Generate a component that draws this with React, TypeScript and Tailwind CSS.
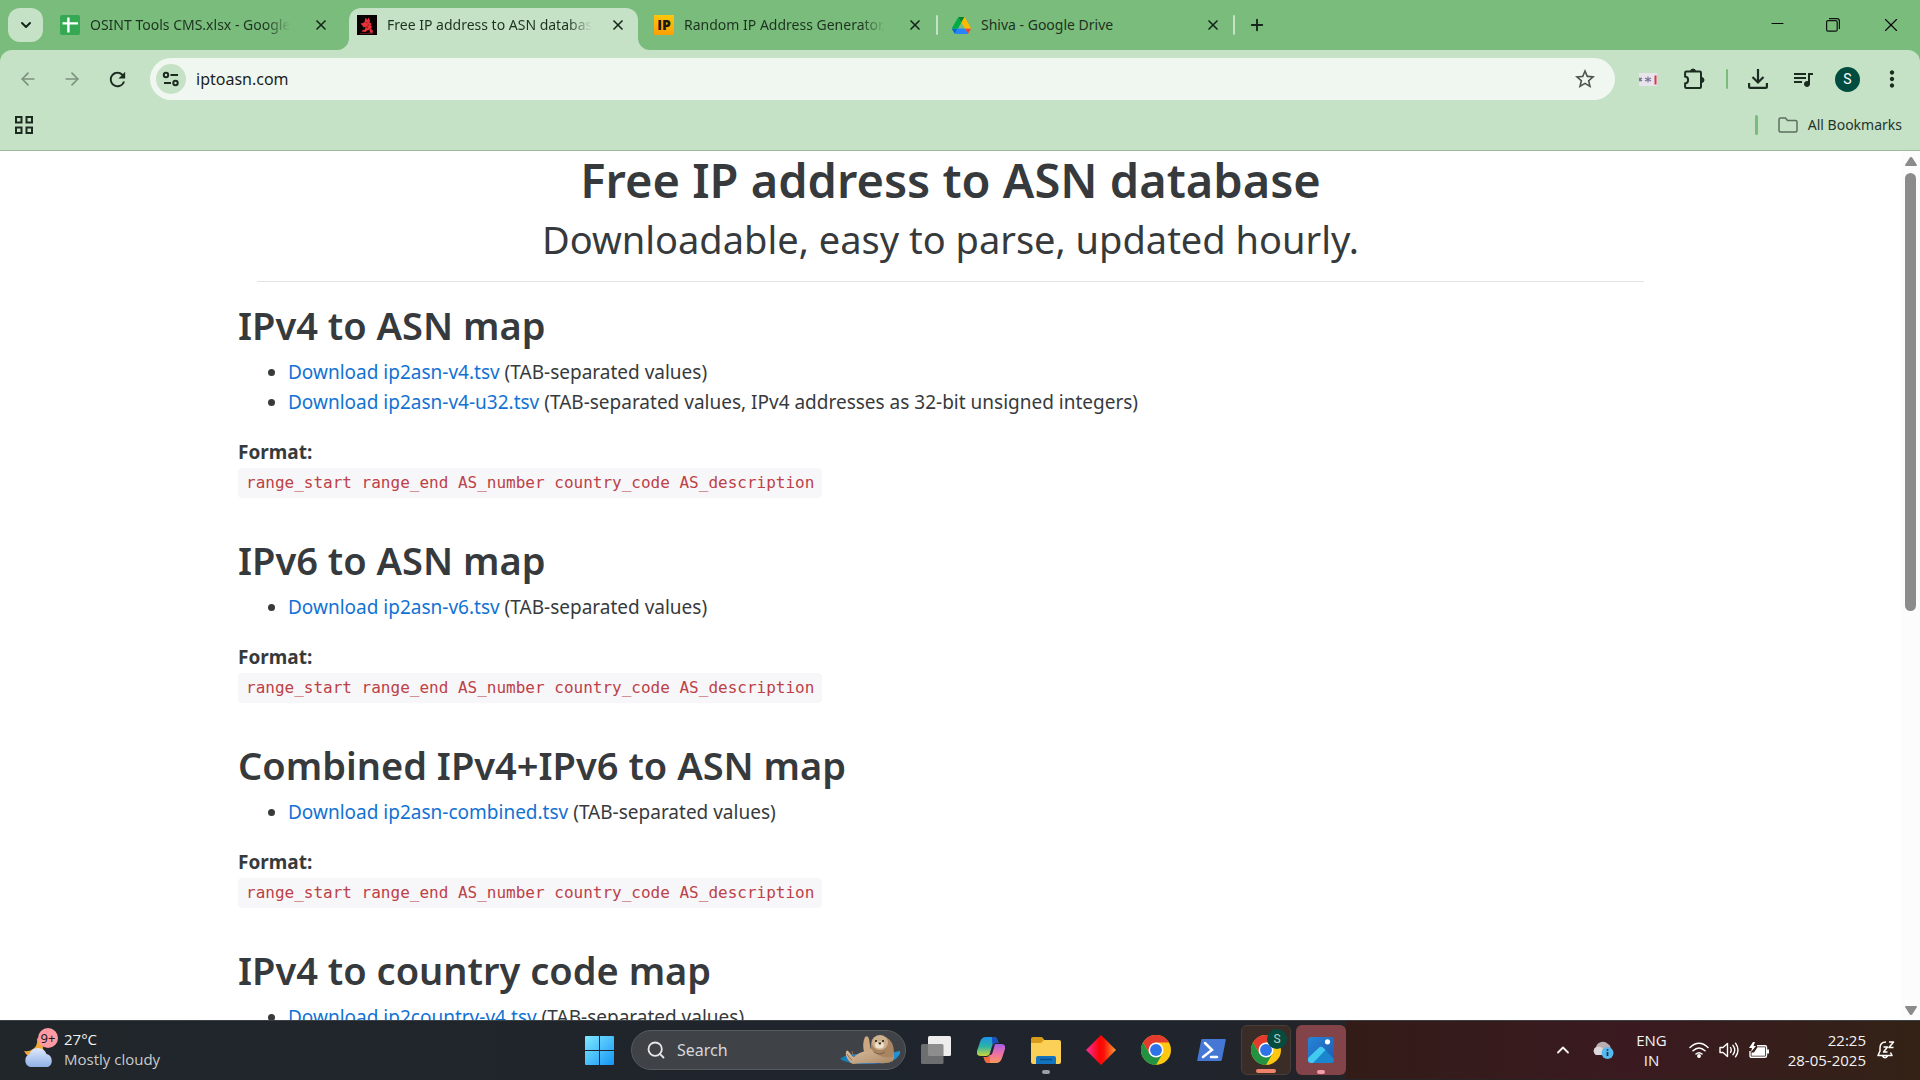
import type { ReactNode } from "react";
import { ChevronDown, ChevronUp, ArrowLeft, ArrowRight, X, Plus, Search, Minus } from "lucide-react";
import { MdRefresh, MdOutlineStarBorder, MdQueueMusic, MdMoreVert } from "react-icons/md";

const FORMAT = "range_start range_end AS_number country_code AS_description";

type Download = { name: string; note: string };

const SECTIONS: { title: string; items: Download[] }[] = [
  {
    title: "IPv4 to ASN map",
    items: [
      { name: "ip2asn-v4.tsv", note: "(TAB-separated values)" },
      { name: "ip2asn-v4-u32.tsv", note: "(TAB-separated values, IPv4 addresses as 32-bit unsigned integers)" },
    ],
  },
  { title: "IPv6 to ASN map", items: [{ name: "ip2asn-v6.tsv", note: "(TAB-separated values)" }] },
  { title: "Combined IPv4+IPv6 to ASN map", items: [{ name: "ip2asn-combined.tsv", note: "(TAB-separated values)" }] },
  { title: "IPv4 to country code map", items: [{ name: "ip2country-v4.tsv", note: "(TAB-separated values)" }] },
];

function SheetsIcon() {
  return (
    <svg viewBox="0 0 20 20" className="size-5 shrink-0">
      <rect width="20" height="20" rx="2" fill="#34a853" />
      <path d="M7.200 2.500h2.400v4.700H18v2.400H9.600v8H7.200v-8H2.500V7.200h4.700z" fill="#fff" />
    </svg>
  );
}

function RabbitIcon() {
  return (
    <svg viewBox="0 0 20 20" className="size-5 shrink-0">
      <rect width="20" height="20" fill="#0a0202" />
      <path d="M8.500 2.500l2 2.500 1-2.500 1.500 3-.5 2 2.500 1.500-1.500 1 1.500 2-1 1.500 2 2.500-.5 2-3-.5.5-2-2-.5-2.500 2-4-.5 1.500-1.500 2-.5.5-3-2 1-1.500-2.500L3.500 8.500 6 8l1.500-1z" fill="#e8323a" />
      <path d="M9 7l1.500 1M9 12l2 1M11.500 9.500l-1 2M12 15l1.500-1" stroke="#7a0c10" strokeWidth=".8" />
      <path d="M3 18.500h13" stroke="#8d1a1c" strokeWidth=".7" />
    </svg>
  );
}

function IpIcon() {
  return (
    <span className="flex size-5 shrink-0 items-center justify-center bg-linear-to-b from-[#fdc70c] to-[#fb9f06] font-['Open_Sans'] text-sm leading-5 font-extrabold text-[#1c1a10]">
      IP
    </span>
  );
}

function DriveIcon() {
  return (
    <svg viewBox="0 0 88 78" className="h-[17px] w-[19px] shrink-0">
      <path d="m6.600 66.850 3.850 6.650c.8 1.400 1.950 2.500 3.300 3.300l13.750-23.800H0c0 1.550.4 3.100 1.200 4.500z" fill="#0066da" />
      <path d="M43.650 25 29.900 1.200c-1.350.8-2.500 1.900-3.300 3.300L1.200 48.500A9 9 0 0 0 0 53h27.500z" fill="#00ac47" />
      <path d="M73.550 76.800c1.350-.8 2.500-1.900 3.300-3.300l1.600-2.750L86.100 57.500c.8-1.400 1.200-2.950 1.200-4.500H59.800l5.850 11.500z" fill="#ea4335" />
      <path d="M43.650 25 57.400 1.200C56.050.4 54.500 0 52.900 0H34.400c-1.600 0-3.150.45-4.500 1.200z" fill="#00832d" />
      <path d="M59.800 53H27.500L13.750 76.800c1.350.8 2.900 1.200 4.500 1.200h50.800c1.600 0 3.150-.45 4.500-1.200z" fill="#2684fc" />
      <path d="M73.400 26.500 60.700 4.500c-.8-1.400-1.950-2.500-3.300-3.300L43.650 25 59.800 53h27.450c0-1.550-.4-3.100-1.200-4.500z" fill="#ffba00" />
    </svg>
  );
}

function ChromeIcon({ className }: { className: string }) {
  return (
    <svg viewBox="0 0 48 48" className={className}>
      <circle cx="24" cy="24" r="24" fill="#fdc712" />
      <path d="M3.200 12A24 24 0 0 1 44.800 12H24L13.600 30z" fill="#e33b2e" />
      <path d="M3.200 12A24 24 0 0 0 24 48L34.400 30 24 34 13.600 30z" fill="#229342" />
      <circle cx="24" cy="24" r="12" fill="#fff" />
      <circle cx="24" cy="24" r="9.500" fill="#2f73e8" />
    </svg>
  );
}

function Tab({ icon, title, active = false, fade = false }: { icon: ReactNode; title: string; active?: boolean; fade?: boolean }) {
  return (
    <div className={active ? "relative flex h-[42px] w-[289px] items-center rounded-t-xl bg-[#c5e1c6] px-2" : "flex h-[42px] w-[289px] items-center px-2"}>
      {active && (
        <>
          <svg viewBox="0 0 12 12" className="absolute bottom-0 -left-3 size-3"><path d="M12 0v12H0A12 12 0 0 0 12 0z" fill="#c5e1c6" /></svg>
          <svg viewBox="0 0 12 12" className="absolute -right-3 bottom-0 size-3"><path d="M0 0v12h12A12 12 0 0 1 0 0z" fill="#c5e1c6" /></svg>
        </>
      )}
      <button className="flex min-w-0 flex-1 items-center gap-2.5 pb-2 text-left">
        {icon}
        <span className={fade ? "mask-r-from-88% text-sm leading-5 whitespace-nowrap text-[#1d3320]" : "text-sm leading-5 whitespace-nowrap text-[#1d3320]"}>{title}</span>
      </button>
      <button aria-label="Close tab" className="flex size-6 shrink-0 items-center justify-center pb-2">
        <X className="size-4 shrink-0 text-[#16261a]" strokeWidth={2.5} />
      </button>
    </div>
  );
}

function TabStrip() {
  return (
    <header className="flex h-[50px] items-end bg-[#7abc7c]">
      <button aria-label="Search tabs" className="mb-2 ml-2 flex h-[34px] w-[35px] items-center justify-center rounded-xl bg-[#c5e1c6]">
        <ChevronDown className="size-4 text-[#16261a]" strokeWidth={3} />
      </button>
      <div className="ml-[9px] flex gap-2">
        <Tab fade icon={<SheetsIcon />} title="OSINT Tools CMS.xlsx - Google" />
        <Tab active fade icon={<RabbitIcon />} title="Free IP address to ASN databas" />
        <Tab fade icon={<IpIcon />} title="Random IP Address Generator," />
      </div>
      <span className="mb-[15px] ml-px h-5 w-[2px] rounded bg-[#c5e1c6]" />
      <div className="ml-[6px]"><Tab icon={<DriveIcon />} title="Shiva - Google Drive" /></div>
      <span className="mb-[15px] h-5 w-[2px] rounded bg-[#c5e1c6]" />
      <button aria-label="New tab" className="mb-[15px] ml-3 flex size-5 items-center justify-center">
        <Plus className="size-[18px] text-[#16261a]" strokeWidth={2.5} />
      </button>
      <div className="ml-auto flex h-full items-center">
        <button aria-label="Minimize" className="flex h-full w-14 items-center justify-center pb-1"><Minus className="size-[19px]" strokeWidth={1.2} /></button>
        <button aria-label="Restore" className="flex h-full w-14 items-center justify-center">
          <svg viewBox="0 0 14 14" className="size-[14px]" fill="none" stroke="#111" strokeWidth="1.200">
            <rect x=".6" y="2.600" width="10.600" height="10.600" rx="1.500" />
            <path d="M3 .6h8a2.400 2.400 0 0 1 2.400 2.400v8" />
          </svg>
        </button>
        <button aria-label="Close window" className="flex h-full w-[59px] items-center justify-center">
          <X className="size-[22px]" strokeWidth={1.2} />
        </button>
      </div>
    </header>
  );
}

function Toolbar() {
  return (
    <div className="bg-[#7abc7c]">
      <nav className="flex h-[60px] items-center rounded-t-xl bg-[#c5e1c6] pb-0.5 text-[#1c2b1f]">
        <button aria-label="Back" className="ml-4 flex size-6 items-center justify-center"><ArrowLeft className="size-5 text-[#7d917f]" /></button>
        <button aria-label="Forward" className="ml-5 flex size-6 items-center justify-center"><ArrowRight className="size-5 text-[#7d917f]" /></button>
        <button aria-label="Reload" className="ml-[21px] flex size-6 items-center justify-center"><MdRefresh className="size-[23px]" /></button>
        <div className="ml-[21px] flex h-[42px] flex-1 items-center rounded-full bg-[#f0f7f0] pr-[18px] pl-[6px]">
          <button aria-label="Site information" className="flex size-[30px] items-center justify-center rounded-full bg-[#c5e1c6]">
            <svg viewBox="0 0 18 18" className="size-[18px]" fill="none" stroke="#1c2b1f" strokeWidth="2">
              <circle cx="4" cy="5" r="2.200" /><path d="M8.500 5H16M2 13h7" /><circle cx="13.500" cy="13" r="2.200" />
            </svg>
          </button>
          <input aria-label="Address" defaultValue="iptoasn.com" className="ml-2.5 min-w-0 flex-1 bg-transparent text-base leading-6 text-[#1c1f1c] outline-none" />
          <button aria-label="Bookmark this page"><MdOutlineStarBorder className="size-6 text-[#4c554d]" /></button>
        </div>
        <button aria-label="Password extension" className="ml-6 flex h-[13px] w-[18px] items-center bg-[#e9e4ec]">
          <svg viewBox="0 0 18 13" className="h-[13px] w-[18px]">
            <path d="M1 4.500v4M-1 5l4 3M3 5l-4 3M9 3.500v6M6 5l6 3M12 5L6 8" stroke="#77769a" strokeWidth="1.200" />
            <path d="M16.500 2.500v9" stroke="#d4384c" strokeWidth="2" />
          </svg>
        </button>
        <button aria-label="Extensions" className="ml-[26px]">
          <svg viewBox="0 0 22 22" className="size-[22px]" fill="none" stroke="#1c2b1f" strokeWidth="2">
            <path d="M3.300 3.500h13.500q1.200 0 1.200 1.200v14.100q0 1.200-1.200 1.200H3.300q-1.200 0-1.200-1.200v-3.300c4-.4 4-6.700 0-7V4.700Q2.100 3.500 3.300 3.500z" />
            <path d="M7.500 3.500a2.500 2.500 0 0 1 5 0zM18.500 9.500a2.500 2.500 0 0 1 0 5z" fill="#1c2b1f" strokeWidth="1" />
          </svg>
        </button>
        <span className="ml-[21px] h-5 w-[2px] rounded bg-[#7abc7c]" />
        <button aria-label="Downloads" className="ml-[20px]">
          <svg viewBox="0 0 20 20" className="size-[20px]" fill="none" stroke="#1c2b1f" strokeWidth="2.200">
            <path d="M10 0v13M4.500 8l5.500 5.500L15.500 8M1.100 14v3.500q0 1.400 1.400 1.400h15q1.400 0 1.400-1.400V14" />
          </svg>
        </button>
        <button aria-label="Media controls" className="ml-[23px]"><MdQueueMusic className="size-6" /></button>
        <button aria-label="Profile" className="ml-[20px] flex size-[25px] items-center justify-center rounded-full bg-[#004d40] font-['Roboto'] text-sm text-white">S</button>
        <button aria-label="Menu" className="mr-[15px] ml-[19px]"><MdMoreVert className="size-[26px]" /></button>
      </nav>
      <div className="flex h-[41px] items-center border-b border-[#9cbb9d] bg-[#c5e1c6] pr-[18px] pb-2.5 pl-[15px]">
        <button aria-label="Apps">
          <svg viewBox="0 0 18 18" className="size-[18px]" fill="none" stroke="#1c2b1f" strokeWidth="2">
            <path d="M1 1h5.500v5.500H1zM11.500 1H17v5.500h-5.500zM1 11.500h5.500V17H1zM11.500 11.500H17V17h-5.500z" />
          </svg>
        </button>
        <span className="ml-auto h-5 w-[3px] rounded bg-[#7abc7c]" />
        <button className="ml-[20px] flex items-center gap-2.5 text-sm leading-5 text-[#24352a]">
          <svg viewBox="0 0 20 16" className="h-4 w-5" fill="none" stroke="#5c6e5e" strokeWidth="1.500">
            <path d="M1 13.500v-11Q1 1 2.500 1h5l2 2.500h8Q19 3.500 19 5v8.500q0 1.500-1.500 1.500h-15Q1 15 1 13.500z" />
          </svg>
          All Bookmarks
        </button>
      </div>
    </div>
  );
}

function Page() {
  return (
    <div className="flex min-h-0 flex-1 bg-white">
      <main className="min-w-0 flex-1 overflow-hidden text-[#373a3c]">
        <div className="mx-auto max-w-[1425px] pt-0.5">
          <h1 className="text-center text-[47px] leading-[54px] font-semibold">Free IP address to ASN database</h1>
          <p className="mt-[10px] text-center text-[38px] leading-[44px]">Downloadable, easy to parse, updated hourly.</p>
          <hr className="mx-[19px] mt-5 border-[#e3e4e5]" />
          <div className="mt-[21px] flex flex-col gap-[41px]">
            {SECTIONS.map((s) => (
              <section key={s.title}>
                <h2 className="text-[38px] leading-[44px] font-semibold">{s.title}</h2>
                <ul className="mt-2.5 list-disc pl-[50px] text-[19px] leading-[30px]">
                  {s.items.map((d) => (
                    <li key={d.name}>
                      <a href="#" className="text-[#1272d3]">Download {d.name}</a> {d.note}
                    </li>
                  ))}
                </ul>
                <p className="mt-5 text-[19px] leading-[30px] font-bold">Format:</p>
                <div className="h-[30px] pt-px">
                  <code className="inline-block rounded bg-[#f7f7f9] px-2 font-['DejaVu_Sans_Mono',monospace] text-base leading-[30px] text-[#bd4147]">{FORMAT}</code>
                </div>
              </section>
            ))}
          </div>
        </div>
      </main>
      <div aria-hidden="true" className="flex w-[19px] flex-col items-center justify-between bg-[#fcfcfc] pt-[6px] pb-[5px]">
        <svg viewBox="0 0 12 10" className="h-2.5 w-3"><path d="M6 0q1 0 1.500 1l4.500 7q0 1-1 1H1q-1 0-1-1l4.500-7Q5 0 6 0z" fill="#8b8b8b" /></svg>
        <div className="my-[6px] min-h-0 flex-1"><div className="h-[53%] w-[11px] rounded-full bg-[#8b8b8b]" /></div>
        <svg viewBox="0 0 12 10" className="h-2.5 w-3"><path d="M6 10q-1 0-1.500-1L0 2q0-1 1-1h10q1 0 1 1L7.500 9Q7 10 6 10z" fill="#8b8b8b" /></svg>
      </div>
    </div>
  );
}

function Otter() {
  return (
    <svg viewBox="0 0 62 32" className="h-8 w-[62px] shrink-0">
      <defs>
        <linearGradient id="water" x1="0" x2="1"><stop offset="0" stopColor="#157fb5" /><stop offset=".7" stopColor="#2a6fc9" /><stop offset="1" stopColor="#1b9ad6" /></linearGradient>
        <linearGradient id="fur" x1="0" y1="0" x2="1" y2="1"><stop offset="0" stopColor="#dfc4a5" /><stop offset="1" stopColor="#a98765" /></linearGradient>
      </defs>
      <path d="M1 25q6-5 14-5h32l14-3q1 4-6 9-8 4-28 4Q8 30 1 25z" fill="url(#water)" />
      <path d="M10 27q-4-5-3-9 1-3 3 0l4 5q7-5 15-7l6-3h17q5 8 2 14-5 3-14 2-16 0-26 1-3-1-4-3z" fill="url(#fur)" />
      <path d="M25 18q-2-9 1-15 3-2 4 2 1 6 2 13z" fill="#cba782" />
      <path d="M32 13q-1-11 9-11 8 0 12 7 3 7 1 14-10 2-17-4-5-2-5-6z" fill="#a98562" />
      <ellipse cx="41" cy="8.500" rx="8" ry="7.500" fill="#cdb08e" />
      <ellipse cx="40.500" cy="11" rx="4.500" ry="3.500" fill="#efe0c9" />
      <circle cx="37" cy="7" r="1" fill="#22180f" /><circle cx="44" cy="7" r="1" fill="#22180f" />
      <path d="M39 8.500h3.500L41 11z" fill="#22180f" />
      <path d="M35 18q5 4 11 0" stroke="#7e5f42" fill="none" />
      <path d="M8 20q2 4 5 6M13 17q0 4 3 6" stroke="#94714e" fill="none" />
    </svg>
  );
}

function AppButton({ label, children, className = "", mark = "" }: { label: string; children: ReactNode; className?: string; mark?: string }) {
  return (
    <button aria-label={label} className={"relative flex size-[50px] items-center justify-center rounded-md " + className}>
      {children}
      {mark && <span className={"absolute bottom-[1px] left-1/2 h-1 -translate-x-1/2 rounded-full " + mark} />}
    </button>
  );
}

function Taskbar() {
  return (
    <footer className="grid h-[60px] shrink-0 grid-cols-[1fr_auto_1fr] items-center border-t border-[#3b4044] bg-linear-to-r from-[#20262a] via-[#1f242d] via-60% to-[#332216] pb-px text-[#f3f3f3]">
      <button className="flex items-center gap-[9px] pb-[3px] pl-6 text-left">
        <span className="relative flex h-[38px] w-[31px] items-end">
          <svg viewBox="0 0 30 30" className="size-[30px]">
            <defs><linearGradient id="cloud" x1="0" y1="0" x2="0" y2="1"><stop offset="0" stopColor="#dfe9fb" /><stop offset="1" stopColor="#8fb0e6" /></linearGradient></defs>
            <path d="M13 0q1 8-4 11-4 3-9 2 3 6 9 6l10-6q1-9-6-13z" fill="#f2a93b" />
            <path d="M6 29a7 7 0 0 1-.500-13 9 9 0 0 1 17 0A7 7 0 0 1 24 29z" fill="url(#cloud)" />
          </svg>
          <span className="absolute -top-0.5 left-[14px] flex size-5 items-center justify-center rounded-full bg-[#ff99a4] text-[13px] leading-5 text-[#1c1c1c]">9+</span>
        </span>
        <span className="font-['Open_Sans',sans-serif] text-[15px] leading-5">
          <span className="block">27°C</span>
          <span className="block text-[#c9cbcd]">Mostly cloudy</span>
        </span>
      </button>

      <div className="flex items-center">
        <AppButton label="Start">
          <svg viewBox="0 0 29 29" className="size-[29px]">
            <defs><linearGradient id="win" x1="0" y1="0" x2="1" y2="1"><stop offset="0" stopColor="#7fe9ff" /><stop offset="1" stopColor="#1595f5" /></linearGradient></defs>
            <path d="M1 0h13v14H0V1q0-1 1-1zM15 0h13q1 0 1 1v13H15zM0 15h14v14H1q-1 0-1-1zM15 15h14v13q0 1-1 1H15z" fill="url(#win)" />
          </svg>
        </AppButton>
        <label className="mr-[5px] ml-[7px] flex h-10 w-[275px] items-center rounded-full border border-[#565b60] bg-[#3f4348] pr-1 pl-[14px]">
          <Search className="size-5 shrink-0 text-[#e6e6e6]" strokeWidth={2.2} />
          <input aria-label="Search" placeholder="Search" className="ml-[11px] w-full min-w-0 bg-transparent text-base leading-6 outline-none placeholder:text-[#d6d7d8]" />
          <Otter />
        </label>
        <div className="flex gap-[5px]">
          <AppButton label="Task view">
            <svg viewBox="0 0 30 28" className="h-7 w-[30px]">
              <rect x="7" width="23" height="20" rx="1.500" fill="#ededed" />
              <rect y="8" width="22.500" height="20" rx="1.500" fill="#7b7b7b" opacity=".85" />
            </svg>
          </AppButton>
          <AppButton label="Copilot">
            <svg viewBox="0 0 28 26" className="h-[26px] w-7">
              <defs>
                <linearGradient id="cpA" x1="0" y1="0" x2="0" y2="1"><stop offset="0" stopColor="#1d93e8" /><stop offset=".5" stopColor="#2bb3a6" /><stop offset="1" stopColor="#cfd63a" /></linearGradient>
                <linearGradient id="cpB" x1="0" y1="0" x2="0" y2="1"><stop offset="0" stopColor="#a560e8" /><stop offset=".5" stopColor="#ee6fa6" /><stop offset="1" stopColor="#f9975a" /></linearGradient>
              </defs>
              <path d="M13 0h4q2 0 3 2l1.500 4H18q-2 0-2.600 2L13 16q-1 3-4 3H4q-5 0-4-5L3 5q1.500-5 6-5z" fill="url(#cpA)" />
              <path d="M15 0h2q2 0 3 2l1.500 4H18q-2 0-2.600 2z" fill="#1b4fc4" />
              <path d="M15 26h-4q-2 0-3-2l-1.500-4H10q2 0 2.600-2L15 10q1-3 4-3h5q5 0 4 5l-3 9q-1.500 5-6 5z" fill="url(#cpB)" />
              <path d="M13 26h-2q-2 0-3-2l-1.500-4H10q2 0 2.600-2z" fill="#f06a3e" />
              <path d="M12.600 18L15 10q.8-2.500 3-3l-2.600 9q-.8 2.500-2.800 2z" fill="#1f2430" />
            </svg>
          </AppButton>
          <AppButton label="File Explorer" mark="w-2 bg-[#9a9fa5]">
            <svg viewBox="0 0 30 27" className="h-[27px] w-[30px]">
              <path d="M0 2q0-2 2-2h8q1 0 2 1l2 3v6H0z" fill="#d79c1c" />
              <path d="M0 6h10l3-3h15q2 0 2 2v20q0 2-2 2H2q-2 0-2-2z" fill="#fcd057" />
              <path d="M5 27v-6q0-2 2-2h16q2 0 2 2v6z" fill="#1273c0" /><path d="M9 22.500h12" stroke="#0b4d87" strokeWidth="1.500" />
            </svg>
          </AppButton>
          <AppButton label="Diamond">
            <svg viewBox="0 0 30 30" className="size-[30px]">
              <defs><linearGradient id="dia"><stop offset="0" stopColor="#f62fa0" /><stop offset=".45" stopColor="#fb0505" /><stop offset=".6" stopColor="#f91208" /><stop offset="1" stopColor="#f7a035" /></linearGradient></defs>
              <path d="M15 0l15 15-15 15L0 15z" fill="url(#dia)" />
            </svg>
          </AppButton>
          <AppButton label="Google Chrome"><ChromeIcon className="size-[30px]" /></AppButton>
          <AppButton label="PowerShell">
            <svg viewBox="0 0 29 22" className="h-[22px] w-[29px]">
              <path d="M5.500 0H28q1 0 .8 1l-4 20q-.3 1-1.300 1H1q-1 0-.8-1l4-20q.3-1 1.300-1z" fill="#4577d4" />
              <path d="M8 4l7 7-9 7M14 18h6" fill="none" stroke="#fff" strokeWidth="2.500" strokeLinecap="round" />
            </svg>
          </AppButton>
          <AppButton label="Google Chrome, profile S" className="border border-[#4a3d35] bg-[#3a2d27]" mark="w-5 bg-[#f0826a]">
            <ChromeIcon className="size-[30px]" />
            <span className="absolute top-[3px] right-[3px] flex size-5 items-center justify-center rounded-full bg-[#054c3f] font-['Roboto'] text-xs text-[#b9cfc9]">S</span>
          </AppButton>
          <AppButton label="Photos" className="bg-[#824349]" mark="w-2 bg-[#f59aa8]">
            <svg viewBox="0 0 26 26" className="size-[26px]">
              <defs>
                <linearGradient id="ph" x1="0" y1="0" x2="1" y2="1"><stop offset="0" stopColor="#2487d8" /><stop offset="1" stopColor="#2257ae" /></linearGradient>
                <clipPath id="phClip"><rect width="26" height="26" rx="3" /></clipPath>
              </defs>
              <g clipPath="url(#phClip)">
                <rect width="26" height="26" fill="url(#ph)" />
                <path d="M10.500 11q2.500-3 5 0L28 24v4H2z" fill="#1a86cf" />
                <path d="M-1 22l11.500-11q2.500-2.500 5 0l2 2L5 26h-6z" fill="#42c9f0" />
                <circle cx="19.500" cy="4.800" r="2.600" fill="#fff" />
              </g>
            </svg>
          </AppButton>
        </div>
      </div>

      <div className="flex h-full items-center justify-end bg-linear-to-r from-[#331c18] via-[#3a1a20] via-50% to-[#332216] pr-[25px] font-['Open_Sans',sans-serif] text-[15px] leading-5">
        <button aria-label="Show hidden icons"><ChevronUp className="size-5" strokeWidth={2.2} /></button>
        <button aria-label="OneDrive" className="ml-[19px]">
          <svg viewBox="0 0 22 20" className="h-5 w-[22px]">
            <path d="M4 15a4.500 4.500 0 0 1 0-8 7 7 0 0 1 12-3q4 2 2 8l-6 3z" fill="#b9adb3" />
            <path d="M4 15a4.500 4.500 0 0 1 .5-8q3-1 6 1l1 7z" fill="#ddd6da" />
            <circle cx="15.500" cy="13" r="6" fill="#55b9ef" /><path d="M15.500 12v4M15.500 9.200v1.600" stroke="#15324a" strokeWidth="1.700" />
          </svg>
        </button>
        <button className="ml-[22px] text-center"><span className="block">ENG</span><span className="block">IN</span></button>
        <button aria-label="Network, volume and battery" className="ml-[22px] flex items-center gap-[10px]">
          <svg viewBox="0 0 20 16" className="h-4 w-5" fill="none" stroke="#fff" strokeWidth="1.500" strokeLinecap="round">
            <path d="M1 5.500q9-8.500 18 0M4 8.800q6-5.600 12 0M7 12q3-2.600 6 0" /><circle cx="10" cy="14" r="1.200" fill="#fff" />
          </svg>
          <svg viewBox="0 0 20 16" className="h-4 w-5" fill="none" stroke="#fff" strokeWidth="1.400" strokeLinecap="round" strokeLinejoin="round">
            <path d="M1 5.500h3L8.500 1.500v13L4 10.500H1zM11.500 5.500q1.500 2.500 0 5M14 3.300q3.500 4.700 0 9.400M16.500 1.200q5 6.800 0 13.600" />
          </svg>
          <svg viewBox="0 0 20 17" className="h-[17px] w-5">
            <path d="M8 3.700h8q1.500 0 1.500 1.500v8.600q0 1.500-1.500 1.500H2.500Q1 15.300 1 13.800V9" fill="none" stroke="#fff" strokeWidth="1.400" />
            <path d="M8.500 5.200h7.500v8.600H2.500V10.500H5z" fill="#fff" /><path d="M18 7.500h2v4h-2z" fill="#fff" /><path d="M4 0L0 6h3l-1 4 5-6H4.500L6 0z" fill="#fff" />
          </svg>
        </button>
        <button className="ml-[19px] text-right"><span className="block">22:25</span><span className="block">28-05-2025</span></button>
        <button aria-label="Notifications" className="ml-[11px]">
          <svg viewBox="0 0 18 18" className="size-[18px]" fill="none" stroke="#fff" strokeWidth="1.500" strokeLinejoin="round">
            <path d="M9 1Q3 1 3 7v3l-2 4.500h14l-1.500-3M5.500 15q2.500 3.500 5 0M6.500 6h4l-4 5h4M12 1h4.500L12 6.500h4.500" />
          </svg>
        </button>
      </div>
    </footer>
  );
}

export default function App() {
  return (
    <div className="flex h-screen flex-col overflow-hidden font-['Noto_Sans','Open_Sans',sans-serif]">
      <TabStrip />
      <Toolbar />
      <Page />
      <Taskbar />
    </div>
  );
}
